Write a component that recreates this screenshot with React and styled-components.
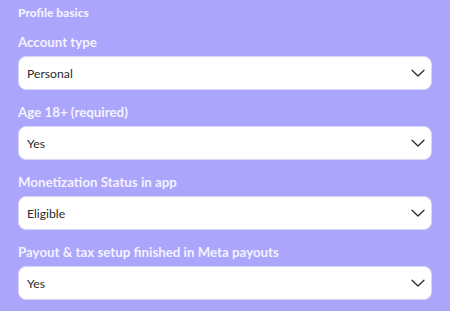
import React from "react";
import styled, { createGlobalStyle } from "styled-components";

const Global = createGlobalStyle`
  html, body { margin: 0; padding: 0; background: #aba5fc; }
  body { font-family: Lato, "Open Sans", sans-serif; }
`;

const Page = styled.div`
  width: 450px;
  height: 311px;
  box-sizing: border-box;
  padding: 5px 18px 0 18px;
  background: #aba5fc;
  display: flex;
  flex-direction: column;
  overflow: hidden;
`;

const Heading = styled.div`
  font-size: 12px;
  line-height: 16px;
  font-weight: 900;
  color: #f4f2ff;
  margin-bottom: 11px;
`;

const Field = styled.div`
  display: flex;
  flex-direction: column;
  gap: 4px;
  margin-bottom: 12px;
`;

const Label = styled.label`
  font-size: 13.3px;
  line-height: 20px;
  font-weight: 700;
  color: #f4f2ff;
`;

const SelectBox = styled.div`
  height: 34px;
  box-sizing: border-box;
  background: #ffffff;
  border-radius: 8px;
  border: 1px solid #d9d6f5;
  display: flex;
  align-items: center;
  justify-content: space-between;
  padding: 0 6px 0 8px;
  font-size: 12.2px;
  color: #2a2a2a;
`;

const Chevron = () => (
  <svg width="14" height="14" viewBox="0 0 14 14" fill="none">
    <path d="M1 4.3 L7 10 L13 4.3" stroke="#2b2b2b" strokeWidth="1.3" strokeLinecap="round" strokeLinejoin="round" />
  </svg>
);

const fields = [
  ["Account type", "Personal"],
  ["Age 18+ (required)", "Yes"],
  ["Monetization Status in app", "Eligible"],
  ["Payout & tax setup finished in Meta payouts", "Yes"],
];

export default function App() {
  return (
    <>
      <Global />
      <Page>
        <Heading>Profile basics</Heading>
        {fields.map(([label, value]) => (
          <Field key={label}>
            <Label>{label}</Label>
            <SelectBox>
              <span>{value}</span>
              <Chevron />
            </SelectBox>
          </Field>
        ))}
      </Page>
    </>
  );
}
